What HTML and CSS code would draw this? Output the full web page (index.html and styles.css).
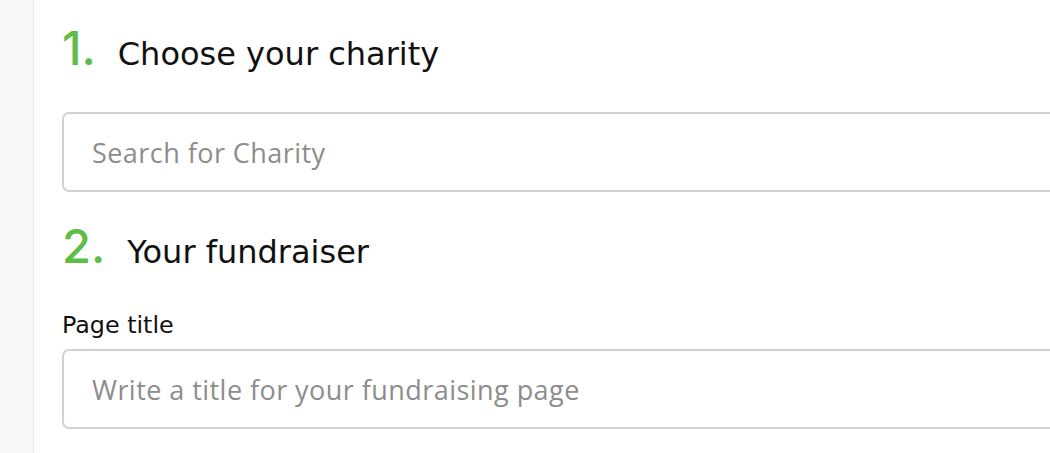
FILE: index.html
```html
<!DOCTYPE html>
<html lang="en">
  <head>
    <meta charset="UTF-8" />
    <meta name="viewport" content="width=device-width, initial-scale=1.0" />
    <title>Create your fundraiser</title>
    <link rel="stylesheet" href="styles.css">
  </head>
  <body>
    <div class="page">
      <aside class="sidebar"></aside>
      <main class="content">
        <section class="step">
          <h2 class="step-title"><span class="step-num">1.</span>Choose your charity</h2>
          <input class="field" type="text" placeholder="Search for Charity" />
        </section>
        <section class="step">
          <h2 class="step-title"><span class="step-num">2.</span>Your fundraiser</h2>
          <label class="field-label" for="page-title">Page title</label>
          <input class="field" id="page-title" type="text" placeholder="Write a title for your fundraising page" />
        </section>
      </main>
    </div>
  </body>
</html>
```

FILE: styles.css
```css
html,
body {
  margin: 0;
  height: 100%;
  background-color: #fff;
  color: #111;
  font-family: "DejaVu Sans", sans-serif;
}
.page {
  display: flex;
  height: 100vh;
  overflow: hidden;
}
.sidebar {
  width: 33px;
  flex-shrink: 0;
  background-color: #f8f8f8;
  border-right: 1px solid #e9e9e9;
}
.content {
  flex: 1;
  padding: 20px 0 0 28px;
  overflow: hidden;
}
.step-title {
  display: flex;
  align-items: baseline;
  gap: 22px;
  margin: 0;
  font-size: 32px;
  font-weight: normal;
  line-height: 56px;
}
.step-num {
  color: #5dbd46;
  font-family: "Inter", sans-serif;
  font-size: 47px;
  font-weight: 500;
  font-variant-numeric: proportional-nums;
}
.field {
  display: block;
  box-sizing: border-box;
  width: calc(100% + 20px);
  height: 80px;
  margin-top: 30px;
  padding: 0 28px;
  border: 2px solid #d2d2d2;
  border-radius: 7px;
  font-family: "Open Sans", sans-serif;
  font-size: 27px;
  letter-spacing: 0.45px;
  color: #333;
  outline: none;
}
.field::placeholder {
  color: #8d8d8d;
}
.step + .step {
  margin-top: 26px;
}
.field-label {
  display: block;
  margin-top: 31px;
  font-size: 23.8px;
}
.field-label + .field {
  margin-top: 10px;
}
```
